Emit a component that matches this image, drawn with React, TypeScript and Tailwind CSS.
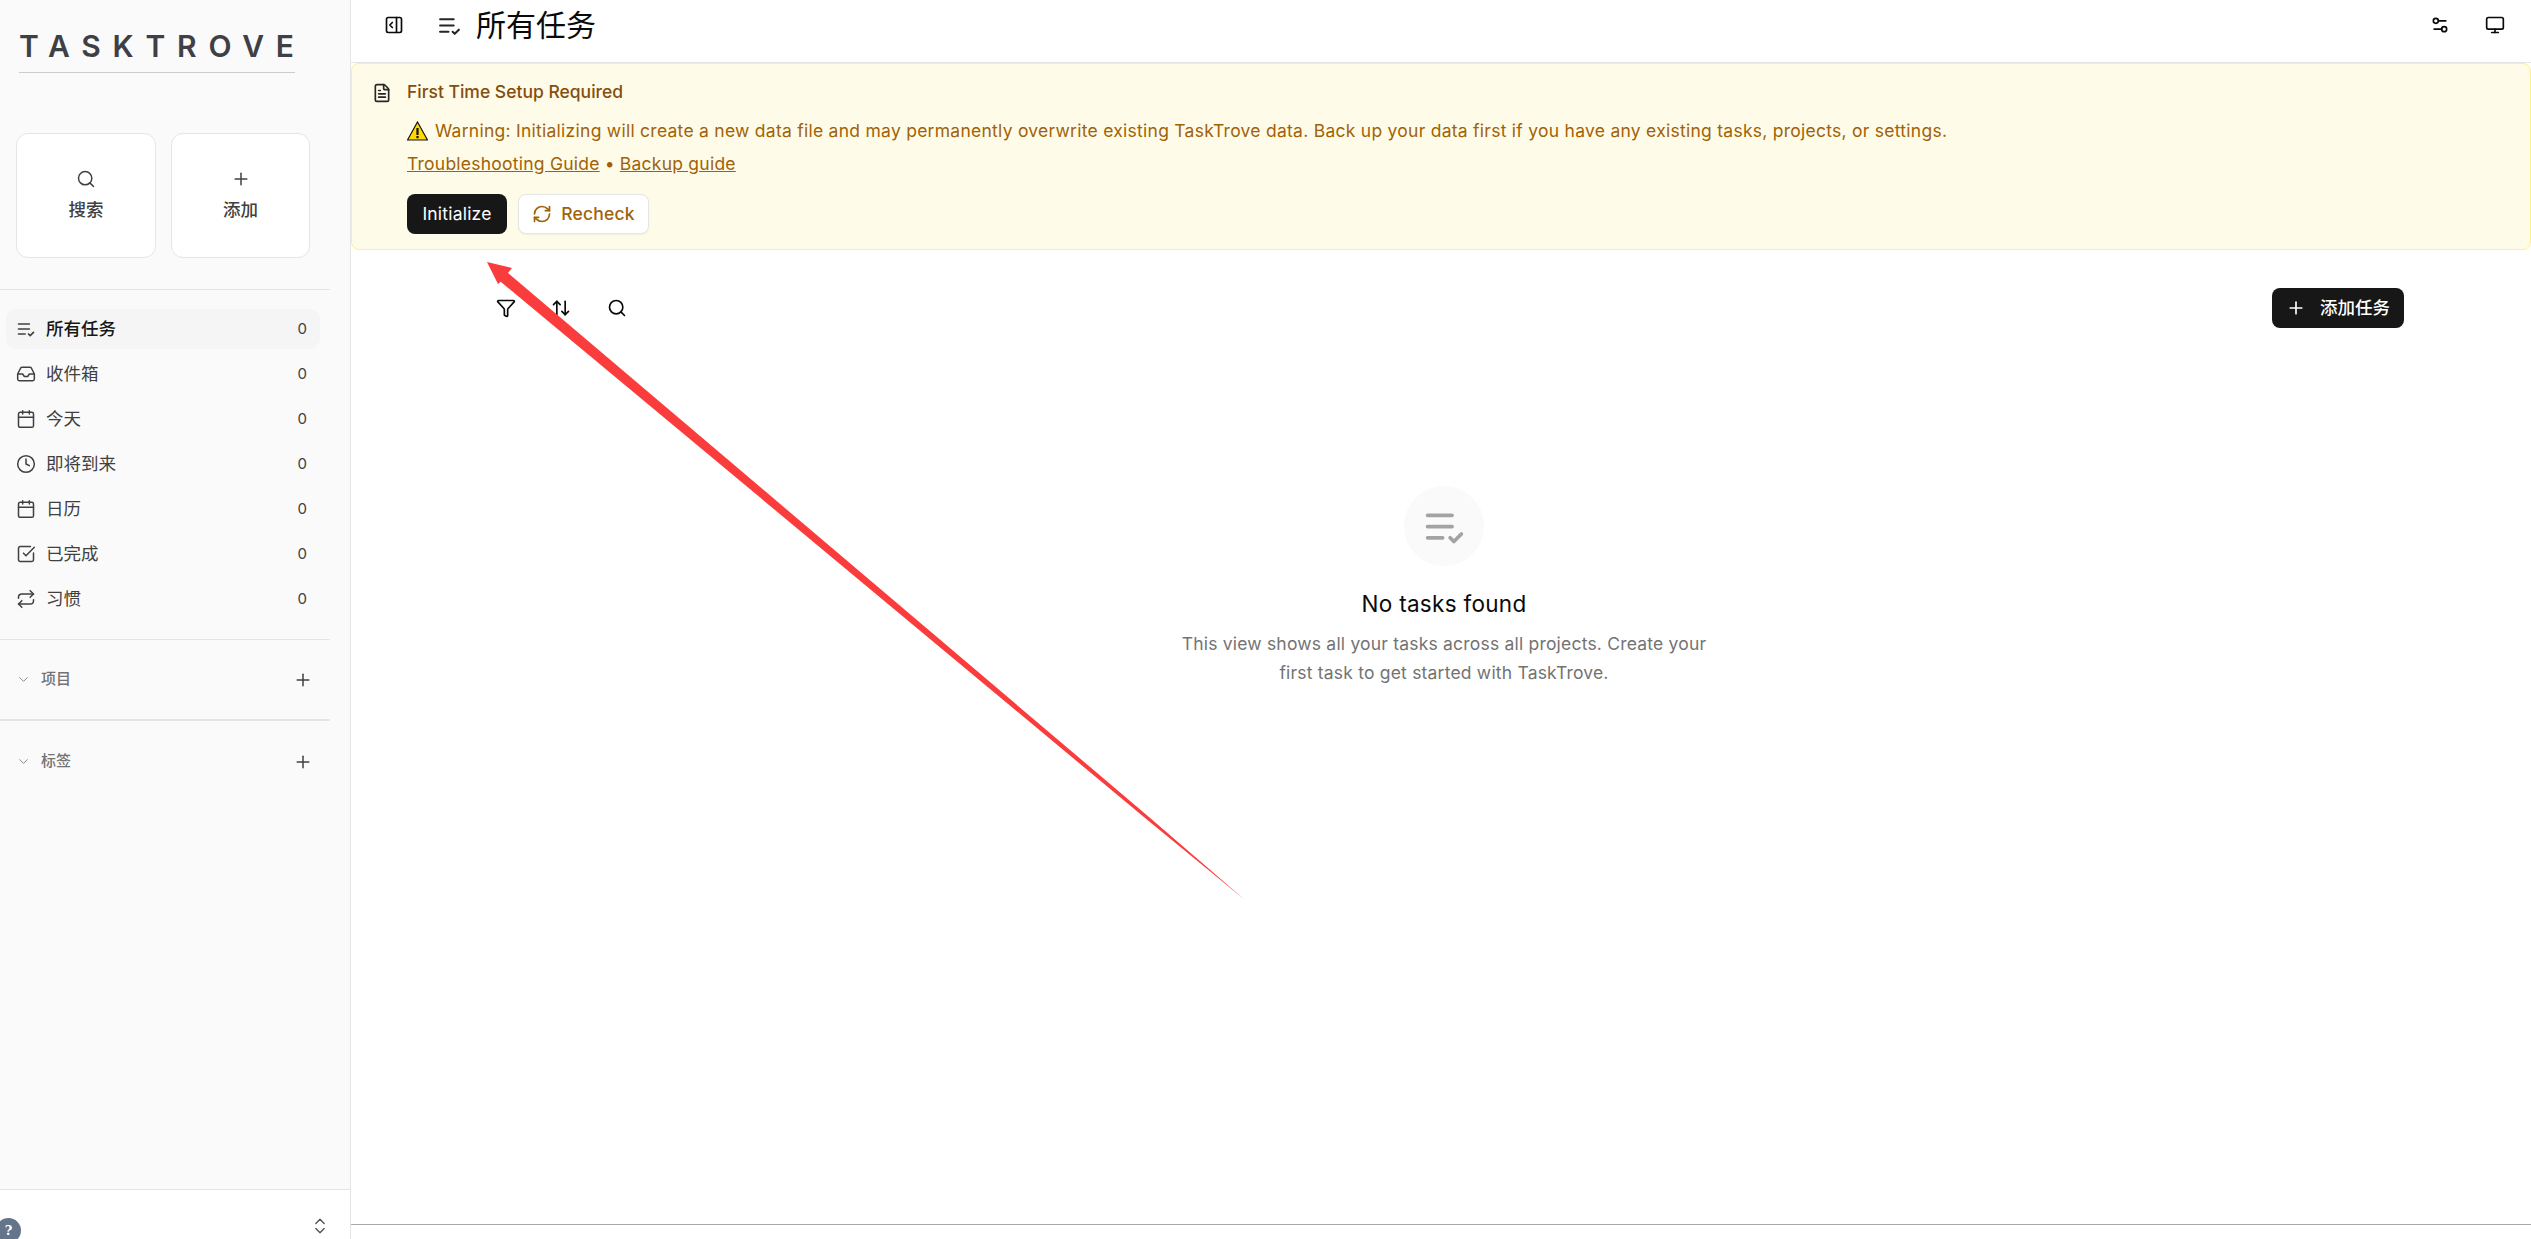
import React from "react";
import { Search, Plus, Inbox, Calendar, Clock, SquareCheckBig, Repeat, ChevronDown, ChevronsUpDown, PanelRightOpen, Settings2, Monitor, FileText, RefreshCw, Funnel, ArrowUpDown } from "lucide-react";

const ListCheck = ({ className = "" }: { className?: string }) => (
  <svg className={className} viewBox="0 0 24 24" fill="none" stroke="currentColor" strokeWidth="2" strokeLinecap="round" strokeLinejoin="round">
    <path d="M11 18H3" /><path d="m15 18 2 2 4-4" /><path d="M16 12H3" /><path d="M16 6H3" />
  </svg>
);

const nav = [
  { label: "所有任务", Icon: ListCheck, active: true },
  { label: "收件箱", Icon: Inbox },
  { label: "今天", Icon: Calendar },
  { label: "即将到来", Icon: Clock },
  { label: "日历", Icon: Calendar },
  { label: "已完成", Icon: SquareCheckBig },
  { label: "习惯", Icon: Repeat },
];

function Section({ label, h, last }: { label: string; h: string; last?: boolean }) {
  return (
    <div className={`w-[330px] flex items-center pl-[16px] pr-[17px] text-[#737373] ${h} ${last ? "" : "border-b-2 border-[#e5e5e5]"}`}>
      <ChevronDown className="w-[15px] h-[15px] text-[#8a8a8a]" strokeWidth={1.6} />
      <span className="ml-[10px] text-[15px] font-medium flex-1">{label}</span>
      <Plus className="w-[20px] h-[20px] text-[#404040]" strokeWidth={1.8} />
    </div>
  );
}

export default function App() {
  return (
    <div className="relative flex h-screen w-full overflow-hidden bg-white text-[#0a0a0a] font-['Inter','Noto_Sans_CJK_SC',sans-serif]">
      <aside className="w-[351px] shrink-0 h-full flex flex-col bg-[#fafafa] border-r border-[#e5e5e5]">
        <div className="h-[133px] pl-[19px] pt-[28px] shrink-0">
          <div className="w-[276px] border-b border-[#cccccc] h-[45px] text-[30px] leading-[36px] font-semibold tracking-[11.8px] text-[#3f3f46] whitespace-nowrap">TASKTROVE</div>
        </div>
        <div className="w-[330px] h-[157px] shrink-0 border-b border-[#e5e5e5] pl-[16px] flex gap-[15px]">
          {[["搜索", Search], ["添加", Plus]].map(([l, I]: any, i) => (
            <div key={l} className={`${i === 0 ? "w-[140px]" : "w-[139px]"} h-[125px] bg-white border border-[#e5e5e5] rounded-[12px] flex flex-col items-center justify-center gap-[8px] text-[#404040]`}>
              <I className="w-[20px] h-[20px]" strokeWidth={1.8} />
              <span className="text-[17.5px] leading-[26px] font-medium">{l}</span>
            </div>
          ))}
        </div>
        <div className="w-[330px] h-[350px] shrink-0 border-b border-[#e5e5e5] pt-[19px] pl-[6px]">
          {nav.map(({ label, Icon, active }) => (
            <div key={label} className={`w-[314px] h-[40px] mb-[5px] rounded-[10px] flex items-center pl-[10px] pr-[13px] ${active ? "bg-[#f5f5f5] text-[#171717]" : "text-[#404040]"}`}>
              <Icon className="w-[20px] h-[20px] text-[#404040]" strokeWidth={1.8} />
              <span className={`ml-[10px] flex-1 text-[17.5px] leading-[24px] ${active ? "font-medium" : ""}`}>{label}</span>
              <span className="text-[15px] text-[#404040]">0</span>
            </div>
          ))}
        </div>
        <Section label="项目" h="h-[81px]" />
        <Section label="标签" h="h-[81px]" last />
        <div className="flex-1" />
        <div className="h-[50px] shrink-0 bg-white border-t border-[#e5e5e5] flex items-start justify-between pr-[20px] pt-[28px] overflow-hidden">
          <div className="-ml-[4px] w-[25px] h-[25px] rounded-full bg-[#64748b] text-white text-[13px] font-bold leading-[25px] text-center font-['DejaVu_Serif',serif]">?</div>
          <ChevronsUpDown className="w-[20px] h-[20px] text-[#525252] -mt-[2px]" strokeWidth={1.6} />
        </div>
      </aside>

      <main className="flex-1 min-w-0 flex flex-col h-full">
        <header className="h-[63px] shrink-0 flex items-center pl-[33px] pr-[26px] pb-[12px] border-b border-[#e5e5e5]">
          <PanelRightOpen className="w-[20px] h-[20px]" strokeWidth={2} />
          <ListCheck className="ml-[33px] w-[25px] h-[25px] text-[#262626]" />
          <h1 className="ml-[14px] text-[30px] leading-[36px] font-normal flex-1">所有任务</h1>
          <Settings2 className="w-[20px] h-[20px] mr-[35px]" strokeWidth={2} />
          <Monitor className="w-[20px] h-[20px]" strokeWidth={2} />
        </header>

        <section className="h-[187px] shrink-0 bg-[#fefce8] border border-[#fef08a] rounded-[8px] pl-[20px] pt-[16px] text-[#a16207]">
          <div className="flex items-center h-[25px]">
            <FileText className="w-[20px] h-[20px] text-[#262626]" strokeWidth={2} />
            <span className="ml-[15px] text-[17.5px] font-medium text-[#854d0e]">First Time Setup Required</span>
          </div>
          <div className="ml-[35px] mt-[12px] h-[28px] flex items-center text-[17.5px] tracking-[0.26px] whitespace-nowrap">
            <svg className="w-[21px] h-[20px] mr-[7px]" viewBox="0 0 21 20">
              <path d="M10.5 1 L20.5 19 H0.5 Z" fill="#ffd900" stroke="#111" strokeWidth="1.2" strokeLinejoin="miter" />
              <rect x="9.4" y="7" width="2.2" height="7" fill="#111" />
              <rect x="9.4" y="15" width="2.2" height="2.2" fill="#111" />
            </svg>
            Warning: Initializing will create a new data file and may permanently overwrite existing TaskTrove data. Back up your data first if you have any existing tasks, projects, or settings.
          </div>
          <div className="ml-[35px] mt-[5px] h-[28px] flex items-center text-[17.5px] tracking-[0.24px]">
            <span className="underline">Troubleshooting Guide</span>
            <span className="mx-[5px]">•</span>
            <span className="underline">Backup guide</span>
          </div>
          <div className="ml-[35px] mt-[16px] flex gap-[11px]">
            <button className="w-[100px] h-[40px] rounded-[8px] bg-[#171717] text-white text-[17.5px] tracking-[0.2px]">Initialize</button>
            <button className="w-[131px] h-[40px] rounded-[8px] bg-white border border-[#e5e5e5] shadow-xs flex items-center justify-center gap-[9px] text-[17.5px] font-medium tracking-[0.2px]">
              <RefreshCw className="w-[20px] h-[20px]" strokeWidth={2} />
              Recheck
            </button>
          </div>
        </section>

        <div className="flex-1 min-h-0 flex flex-col">
          <div className="h-[40px] mt-[38px] shrink-0 ml-[145px] mr-[127px] flex items-center">
            <Funnel className="w-[20px] h-[20px]" strokeWidth={2} />
            <ArrowUpDown className="ml-[35px] w-[20px] h-[20px]" strokeWidth={2} />
            <Search className="ml-[36px] w-[20px] h-[20px]" strokeWidth={2} />
            <div className="flex-1" />
            <button className="w-[132px] h-[40px] rounded-[8px] bg-[#171717] text-white flex items-center justify-center gap-[14px] text-[17.5px] font-medium">
              <Plus className="w-[20px] h-[20px]" strokeWidth={2} />
              添加任务
            </button>
          </div>
          <div className="mt-[158px] pl-[6px] flex flex-col items-center">
            <div className="w-[80px] h-[80px] rounded-full bg-[#fafafa] flex items-center justify-center">
              <ListCheck className="w-[45px] h-[45px] text-[#a3a3a3]" />
            </div>
            <h2 className="mt-[20px] text-[22.5px] leading-[35px] font-normal tracking-[0.3px]">No tasks found</h2>
            <p className="mt-[9px] w-[545px] text-center text-[17.5px] leading-[28.5px] tracking-[0.2px] text-[#737373]">This view shows all your tasks across all projects. Create your first task to get started with TaskTrove.</p>
          </div>
        </div>
        <div className="h-[15px] shrink-0 border-t border-[#aaaaaa]" />
      </main>

      <svg className="absolute inset-0 w-full h-full pointer-events-none" viewBox="0 0 2531 1239">
        <polygon points="487,262 512,268 508,273 1151,818.7 1245,900 1149,821.3 500.7,281.7 498,284" fill="#fb3c3c" />
      </svg>
    </div>
  );
}
